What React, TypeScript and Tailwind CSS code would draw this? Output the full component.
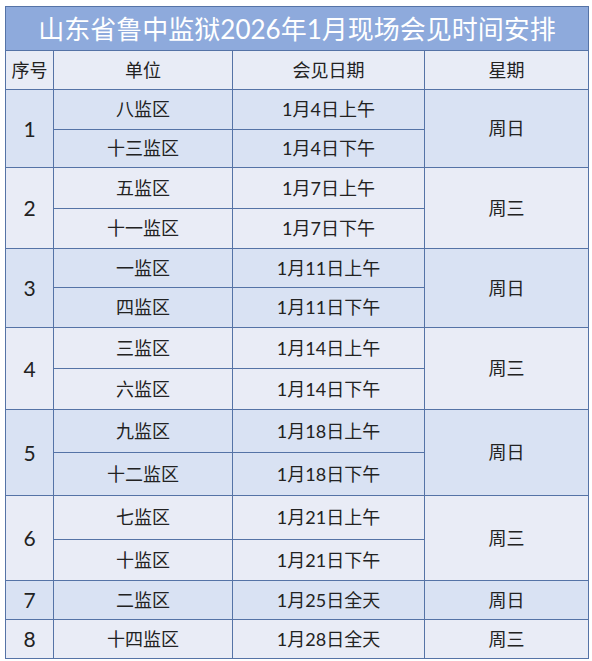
import React from 'react';

interface Group {
    no: number,
    week: string,
    rows: { unit: string, date: string, h: number }[]
}

const groups: Group[] = [
    {no: 1, week: '周日', rows: [{unit: '八监区', date: '1月4日上午', h: 40}, {unit: '十三监区', date: '1月4日下午', h: 38}]},
    {no: 2, week: '周三', rows: [{unit: '五监区', date: '1月7日上午', h: 41}, {unit: '十一监区', date: '1月7日下午', h: 40}]},
    {no: 3, week: '周日', rows: [{unit: '一监区', date: '1月11日上午', h: 39}, {unit: '四监区', date: '1月11日下午', h: 40}]},
    {no: 4, week: '周三', rows: [{unit: '三监区', date: '1月14日上午', h: 41}, {unit: '六监区', date: '1月14日下午', h: 41}]},
    {no: 5, week: '周日', rows: [{unit: '九监区', date: '1月18日上午', h: 43}, {unit: '十二监区', date: '1月18日下午', h: 43}]},
    {no: 6, week: '周三', rows: [{unit: '七监区', date: '1月21日上午', h: 44}, {unit: '十监区', date: '1月21日下午', h: 41}]},
    {no: 7, week: '周日', rows: [{unit: '二监区', date: '1月25日全天', h: 39}]},
    {no: 8, week: '周三', rows: [{unit: '十四监区', date: '1月28日全天', h: 39}]},
];

const cell = "border border-[#5573a6] text-center align-middle p-0";

const App = () => {
    return (
        <div className="w-[592px] h-[661px] bg-white pt-[6px] pl-[5px]"
             style={{fontFamily: 'Lato, "Noto Sans CJK SC", sans-serif'}}>
            <table className="table-fixed border-collapse w-[583px] text-[#222222] text-[18px]">
                <colgroup>
                    <col className="w-[48px]"/>
                    <col className="w-[179px]"/>
                    <col className="w-[192px]"/>
                    <col className="w-[164px]"/>
                </colgroup>
                <tbody>
                <tr className="h-[44px]">
                    <td colSpan={4} className={cell + " bg-[#8eaadc] text-white text-[26px] leading-none"}>
                        山东省鲁中监狱2026年1月现场会见时间安排
                    </td>
                </tr>
                <tr className="h-[39px] bg-[#e8ecf6]">
                    <td className={cell}>序号</td>
                    <td className={cell}>单位</td>
                    <td className={cell}>会见日期</td>
                    <td className={cell}>星期</td>
                </tr>
                {groups.map(g => {
                    const bg = g.no % 2 === 1 ? 'bg-[#d9e2f3]' : 'bg-[#e9ecf6]'
                    return g.rows.map((r, i) => (
                        <tr key={g.no + '-' + i} className={bg} style={{height: r.h}}>
                            {i === 0 &&
                                <td rowSpan={g.rows.length} className={cell + " text-[21px]"}>{g.no}</td>}
                            <td className={cell}>{r.unit}</td>
                            <td className={cell}>{r.date}</td>
                            {i === 0 && <td rowSpan={g.rows.length} className={cell}>{g.week}</td>}
                        </tr>
                    ))
                })}
                </tbody>
            </table>
        </div>
    );
};

export default App;
